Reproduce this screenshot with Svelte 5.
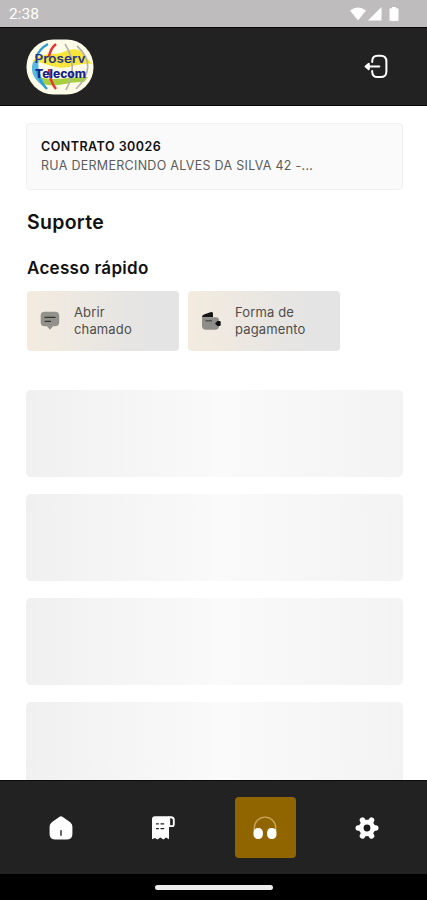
<script>
	const contract = {
		number: 'CONTRATO 30026',
		address: 'RUA DERMERCINDO ALVES DA SILVA 42 -...'
	};

	const shortcuts = [
		{ icon: 'chat', label: 'Abrir chamado' },
		{ icon: 'wallet', label: 'Forma de pagamento' }
	];

	const tabs = ['home', 'invoice', 'support', 'settings'];
	let activeTab = 'support';

	const placeholders = [1, 2, 3, 4];
</script>

<div class="screen">
	<div class="status-bar">
		<span class="clock">2:38</span>
		<svg class="status-icons" width="50" height="15" viewBox="0 0 50 15" fill="#fff">
			<path d="M0 3.6Q8 -2.5 16 3.6L8 13.5Z" />
			<path d="M31.5 0V13.5H18Z" />
			<path d="M40.5 1.3H42V0h4v1.3h1.5q1 0 1 1v10.6q0 1-1 1h-7q-1 0-1-1V2.3q0-1 1-1Z" />
		</svg>
	</div>

	<header>
		<svg class="logo" width="68" height="56" viewBox="0 0 68 56">
			<defs>
				<clipPath id="globe"><rect x="0.5" y="0.5" width="67" height="55" rx="27" /></clipPath>
			</defs>
			<g clip-path="url(#globe)">
				<rect width="68" height="56" fill="#fffde7" />
				<path d="M6 22C18 12 28 17 37 13S53 9 58 15L66 25C51 23 42 31 30 28S14 23 6 22Z" fill="#f7e53b" />
				<path d="M8 35C22 44 38 38 62 38L58 43C42 42 34 49 16 45Z" fill="#a8cf3d" />
				<path d="M7 23Q2 38 20 49L15 37Q11 30 13 20Z" fill="#56b9e4" />
				<g fill="none">
					<path d="M22 5Q13 10 10 19M11 32Q13 42 21 50" stroke="#2f9bd5" stroke-width="2.4" />
					<path d="M30 5Q24 10 23 18M23 30Q24 43 30 50" stroke="#e93434" stroke-width="2.5" />
					<path d="M39 5Q53 27 40 51M51 7Q73 27 50 50" stroke="#b4b4ae" stroke-width="1.7" />
				</g>
			</g>
			<g class="brand">
				<text x="8.5" y="23.5" textLength="51" lengthAdjust="spacingAndGlyphs">Proserv</text>
				<text class="bold" x="9" y="38.5" textLength="51" lengthAdjust="spacingAndGlyphs">Telecom</text>
			</g>
		</svg>

		<button class="logout" aria-label="Sair">
			<svg width="24" height="26" viewBox="0 0 24 26" fill="none" stroke="#fff" stroke-width="2" stroke-linecap="round" stroke-linejoin="round">
				<path d="M8.2 8V7Q8.5 1.8 13.5 1.8H16.8Q22.4 1.8 22.4 7.5V17.5Q22.4 23.1 16.8 23.1H13.5Q8.5 23.1 8.2 18V17" />
				<path d="M15.3 12.5H3" />
				<path d="M4.8 9.8L1.6 12.5L4.8 15.2Z" fill="#fff" />
			</svg>
		</button>
	</header>

	<main>
		<section class="contract">
			<strong>{contract.number}</strong>
			<span>{contract.address}</span>
		</section>

		<h1>Suporte</h1>
		<h2>Acesso rápido</h2>

		<div class="shortcuts">
			{#each shortcuts as item}
				<button class="shortcut">
					{#if item.icon === 'chat'}
						<svg width="20" height="20" viewBox="0 0 20 20">
							<path d="M4.5 .7H15Q19.2 .7 19.2 4.8V11.2Q19.2 15.3 15 15.3H13L10 18.8L7 15.3H4.5Q.7 15.3.7 11.2V4.8Q.7 .7 4.5 .7Z" fill="#92918c" />
							<path d="M5 6.3H15M5 10.3H10.5" stroke="#35342f" stroke-width="1.3" stroke-linecap="round" />
						</svg>
					{:else}
						<svg width="20" height="20" viewBox="0 0 20 20">
							<path d="M1 6Q1 4.2 3 3.5L9.3 1.2Q12 .2 12 2.6V6.2H1Z" fill="#151515" />
							<path d="M1 6.2H15Q18 6.2 18 9.2V15Q18 18.8 14.2 18.8H5Q1 18.8 1 14.8Z" fill="#8e8d89" />
							<path d="M4.5 9.8H11" stroke="#454440" stroke-width="1.2" />
							<path d="M14 12.5L16.4 10.1H18.7Q19.7 10.1 19.7 11.3V13.7Q19.7 14.9 18.7 14.9H16.4Z" fill="#111" />
						</svg>
					{/if}
					<span>{item.label}</span>
				</button>
			{/each}
		</div>

		<div class="placeholders">
			{#each placeholders as id (id)}
				<div class="placeholder"></div>
			{/each}
		</div>
	</main>

	<nav>
		{#each tabs as tab}
			<button class="tab" class:active={tab === activeTab} aria-label={tab} on:click={() => (activeTab = tab)}>
				<svg width="26" height="26" viewBox="0 0 26 26" fill="#fff">
					{#if tab === 'home'}
						<path d="M11.2 2Q13 .6 14.8 2L22.2 7.3Q24.4 9 24.4 11.5V19Q24.4 24.4 19.5 24.4H6.5Q1.6 24.4 1.6 19V11.5Q1.6 9 3.8 7.3Z" />
						<path d="M13 15.8V20.2" stroke="#222" stroke-width="1.4" stroke-linecap="round" />
					{:else if tab === 'invoice'}
						<path d="M5 1.2H19V24.2L16 22.4L13.4 24.4L10.4 22.4L7.4 24.4L5 23L2 24.2V4.5Q2 1.2 5 1.2Z" />
						<path d="M19.2 2.2H21Q23.8 2.2 23.8 5V9.2Q23.8 11.1 22 11.1H19.2Z" fill="#222" stroke="#fff" stroke-width="1.9" />
						<path d="M6 8.9H8.8M10.5 8.9H14.2M6 13.6H8.8M10.5 13.6H14.2" stroke="#222" stroke-width="1.3" />
					{:else if tab === 'support'}
						<path d="M2.3 16V12.8A10.7 10.7 0 0 1 23.7 12.8V16" fill="none" stroke="#c8a75c" stroke-width="1.4" />
						<rect x="1.5" y="13" width="9.4" height="11" rx="4.4" />
						<rect x="15.1" y="13" width="9.4" height="11" rx="4.4" />
					{:else}
						<circle cx="13" cy="13" r="8.2" />
						<path d="M4.3 13H21.7M8.5 5.2L17.5 20.8M17.5 5.2L8.5 20.8" stroke="#fff" stroke-width="5.6" stroke-linecap="round" />
						<circle cx="13" cy="13" r="3.4" fill="#1a1a1a" />
					{/if}
				</svg>
			</button>
		{/each}
	</nav>

	<div class="gesture-bar"><span></span></div>
</div>

<style>
	:global(body) {
		margin: 0;
	}

	.screen {
		display: flex;
		flex-direction: column;
		width: 427px;
		height: 900px;
		overflow: hidden;
		background: #fff;
		font-family: Inter, sans-serif;
		color: #111;
	}

	button {
		border: 0;
		padding: 0;
		font: inherit;
		background: none;
	}

	svg {
		display: block;
		flex-shrink: 0;
	}

	/* ANDROID STATUS BAR */
	.status-bar {
		display: flex;
		justify-content: space-between;
		align-items: center;
		box-sizing: border-box;
		height: 27px;
		padding: 1px 27px 0 9px;
		background: #bfbcbd;
	}

	.clock {
		font-family: Roboto, sans-serif;
		font-size: 15.5px;
		color: #fff;
	}

	/* TOP BAR */
	header {
		display: flex;
		justify-content: space-between;
		align-items: center;
		box-sizing: border-box;
		height: 79px;
		padding: 0 39px 0 26px;
		border-top: 1px solid #080808;
		border-bottom: 1px solid #080808;
		background: #222;
	}

	.brand {
		font-family: Inter, sans-serif;
		font-size: 12px;
		font-weight: 600;
		fill: #26358b;
	}

	.brand .bold {
		font-size: 11.5px;
		font-weight: 800;
		fill: #15228c;
	}

	/* CONTENT */
	main {
		flex: 1;
		min-height: 0;
		overflow: hidden;
		padding: 17px 24px 0 26px;
	}

	.contract {
		display: flex;
		flex-direction: column;
		box-sizing: border-box;
		height: 67px;
		padding: 13px 14px;
		border: 1px solid #f0f0f0;
		border-radius: 4px;
		background: #fafafa;
		font-size: 12.5px;
		line-height: 19px;
		letter-spacing: 0.29px;
		color: #5c5c5c;
	}

	.contract strong {
		font-weight: 600;
		letter-spacing: 0.48px;
		color: #111;
	}

	h1,
	h2 {
		margin: 0 0 0 1px;
		font-weight: 600;
	}

	h1 {
		margin-top: 20px;
		font-size: 19.5px;
		line-height: 25px;
		letter-spacing: 0.3px;
	}

	h2 {
		margin-top: 21px;
		font-size: 17px;
		line-height: 24px;
		letter-spacing: 0.3px;
	}

	.shortcuts {
		display: flex;
		gap: 9px;
		margin: 11px 0 0 1px;
	}

	.shortcut {
		display: flex;
		align-items: center;
		gap: 14px;
		box-sizing: border-box;
		width: 152px;
		height: 60px;
		padding: 0 13px;
		border-radius: 4px;
		background: linear-gradient(90deg, #f3ebdf, #e4e4e4 80%);
		font-size: 13px;
		line-height: 17px;
		letter-spacing: 0.14px;
		text-align: left;
		color: #4e4d4b;
	}

	.shortcut span {
		width: 80px;
	}

	.placeholders {
		display: grid;
		gap: 17px;
		margin-top: 39px;
	}

	.placeholder {
		height: 87px;
		border-radius: 5px;
		background: linear-gradient(90deg, #f0f0f1, #fafafa 52%, #f4f3f4);
	}

	/* BOTTOM NAVIGATION */
	nav {
		display: flex;
		justify-content: space-between;
		box-sizing: border-box;
		height: 94px;
		padding: 16px 29.5px 0 30.5px;
		border-top: 1px solid #0b0b0b;
		background: #222;
	}

	.tab {
		display: flex;
		align-items: center;
		justify-content: center;
		width: 61px;
		height: 61px;
		border-radius: 4px;
	}

	.tab.active {
		background: #906500;
	}

	.gesture-bar {
		display: flex;
		justify-content: center;
		box-sizing: border-box;
		height: 26px;
		padding-top: 11px;
		background: #000;
	}

	.gesture-bar span {
		width: 118px;
		height: 5px;
		border-radius: 3px;
		background: #ececec;
	}
</style>
